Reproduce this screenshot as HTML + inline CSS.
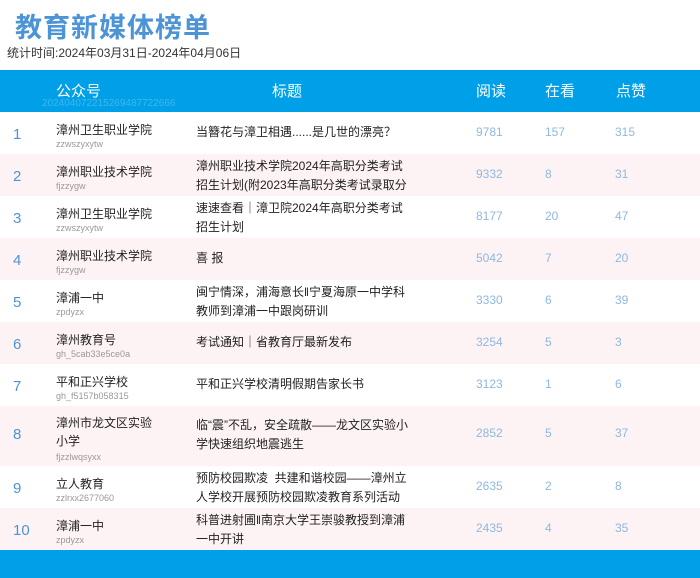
<!DOCTYPE html>
<html><head><meta charset="utf-8"><style>
*{margin:0;padding:0;box-sizing:border-box}
body{width:700px;height:578px;overflow:hidden;background:#fff;font-family:"Liberation Sans","Noto Sans CJK SC",sans-serif;position:relative}
.t{position:absolute;left:15px;top:6px;font-size:27px;font-weight:bold;color:#4d94d6;letter-spacing:1px}
.d{position:absolute;left:7px;top:44px;font-size:12px;color:#333}
.h{position:absolute;left:0;top:70px;width:700px;height:42px;background:#00a0e9;color:#fff;font-size:15px}
.h span{position:absolute;top:10px}
.h .id{position:absolute;left:42px;top:28px;font-size:10px;color:#3bb8ef}
.r{position:absolute;left:0;width:700px;font-size:12px;color:#222}
.r.p{background:#fdf3f4}
.r div{position:absolute}
.n{left:13px;font-size:15px;color:#4d94d6}
.nm{left:56px}
.nm small{display:block;font-size:9px;color:#999;margin-top:1px}
.ti{left:196px;width:214px;line-height:19px;max-height:38px;overflow:hidden}
.v{color:#8fb8e0;font-size:12px}
.f{position:absolute;left:0;top:550px;width:700px;height:28px;background:#00a0e9}
</style></head><body>
<div class="t">教育新媒体榜单</div>
<div class="d">统计时间:2024年03月31日-2024年04月06日</div>
<div class="h"><span style="left:56px">公众号</span><span style="left:272px">标题</span><span style="left:476px">阅读</span><span style="left:545px">在看</span><span style="left:616px">点赞</span><div class="id">202404072215269487722666</div></div>

<div class="r" style="top:112px;height:42px"><div class="n" style="top:14px">1</div><div class="nm" style="top:9px">漳州卫生职业学院<small>zzwszyxytw</small></div><div class="ti" style="top:11px">当簪花与漳卫相遇......是几世的漂亮？</div><div class="v" style="left:476px;top:13px">9781</div><div class="v" style="left:545px;top:13px">157</div><div class="v" style="left:615px;top:13px">315</div></div>

<div class="r p" style="top:154px;height:42px"><div class="n" style="top:14px">2</div><div class="nm" style="top:9px">漳州职业技术学院<small>fjzzygw</small></div><div class="ti" style="top:3px">漳州职业技术学院2024年高职分类考试招生计划(附2023年高职分类考试录取分数线</div><div class="v" style="left:476px;top:13px">9332</div><div class="v" style="left:545px;top:13px">8</div><div class="v" style="left:615px;top:13px">31</div></div>

<div class="r" style="top:196px;height:42px"><div class="n" style="top:14px">3</div><div class="nm" style="top:9px">漳州卫生职业学院<small>zzwszyxytw</small></div><div class="ti" style="top:3px">速速查看｜漳卫院2024年高职分类考试招生计划</div><div class="v" style="left:476px;top:13px">8177</div><div class="v" style="left:545px;top:13px">20</div><div class="v" style="left:615px;top:13px">47</div></div>

<div class="r p" style="top:238px;height:42px"><div class="n" style="top:14px">4</div><div class="nm" style="top:9px">漳州职业技术学院<small>fjzzygw</small></div><div class="ti" style="top:11px">喜 报</div><div class="v" style="left:476px;top:13px">5042</div><div class="v" style="left:545px;top:13px">7</div><div class="v" style="left:615px;top:13px">20</div></div>

<div class="r" style="top:280px;height:42px"><div class="n" style="top:14px">5</div><div class="nm" style="top:9px">漳浦一中<small>zpdyzx</small></div><div class="ti" style="top:3px">闽宁情深，浦海意长‖宁夏海原一中学科教师到漳浦一中跟岗研训</div><div class="v" style="left:476px;top:13px">3330</div><div class="v" style="left:545px;top:13px">6</div><div class="v" style="left:615px;top:13px">39</div></div>

<div class="r p" style="top:322px;height:42px"><div class="n" style="top:14px">6</div><div class="nm" style="top:9px">漳州教育号<small>gh_5cab33e5ce0a</small></div><div class="ti" style="top:11px">考试通知｜省教育厅最新发布</div><div class="v" style="left:476px;top:13px">3254</div><div class="v" style="left:545px;top:13px">5</div><div class="v" style="left:615px;top:13px">3</div></div>

<div class="r" style="top:364px;height:42px"><div class="n" style="top:14px">7</div><div class="nm" style="top:9px">平和正兴学校<small>gh_f5157b058315</small></div><div class="ti" style="top:11px">平和正兴学校清明假期告家长书</div><div class="v" style="left:476px;top:13px">3123</div><div class="v" style="left:545px;top:13px">1</div><div class="v" style="left:615px;top:13px">6</div></div>

<div class="r p" style="top:406px;height:60px"><div class="n" style="top:20px">8</div><div class="nm" style="top:8px;width:100px;line-height:18px">漳州市龙文区实验小学<small style="line-height:12px">fjzzlwqsyxx</small></div><div class="ti" style="top:10px">临“震”不乱，安全疏散——龙文区实验小学快速组织地震逃生</div><div class="v" style="left:476px;top:20px">2852</div><div class="v" style="left:545px;top:20px">5</div><div class="v" style="left:615px;top:20px">37</div></div>

<div class="r" style="top:466px;height:42px"><div class="n" style="top:14px">9</div><div class="nm" style="top:9px">立人教育<small>zzlrxx2677060</small></div><div class="ti" style="top:3px">预防校园欺凌&nbsp; 共建和谐校园——漳州立人学校开展预防校园欺凌教育系列活动</div><div class="v" style="left:476px;top:13px">2635</div><div class="v" style="left:545px;top:13px">2</div><div class="v" style="left:615px;top:13px">8</div></div>

<div class="r p" style="top:508px;height:42px"><div class="n" style="top:14px">10</div><div class="nm" style="top:9px">漳浦一中<small>zpdyzx</small></div><div class="ti" style="top:3px">科普进射圃‖南京大学王崇骏教授到漳浦一中开讲</div><div class="v" style="left:476px;top:13px">2435</div><div class="v" style="left:545px;top:13px">4</div><div class="v" style="left:615px;top:13px">35</div></div>

<div class="f"></div>
</body></html>
